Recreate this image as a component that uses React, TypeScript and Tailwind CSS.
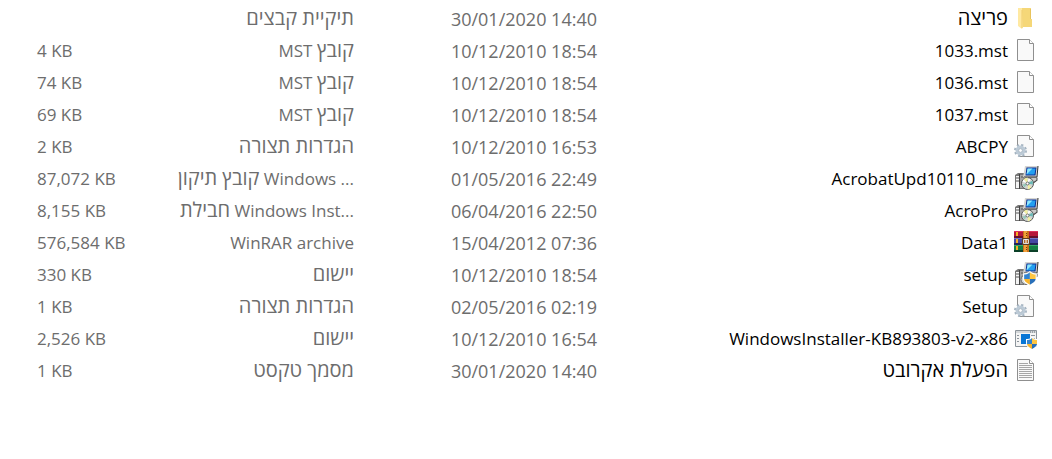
import type { ReactNode } from "react";

type IconName =
  | "folder"
  | "file"
  | "config"
  | "installer"
  | "archive"
  | "setup"
  | "application"
  | "text";

type FileRow = {
  icon: IconName;
  name: string;
  date: string;
  type: string;
  size?: string;
  clipped?: boolean;
};

const files: FileRow[] = [
  { icon: "folder", name: "פריצה", date: "30/01/2020 14:40", type: "תיקיית קבצים" },
  { icon: "file", name: "1033.mst", date: "10/12/2010 18:54", type: "קובץ MST", size: "4 KB" },
  { icon: "file", name: "1036.mst", date: "10/12/2010 18:54", type: "קובץ MST", size: "74 KB" },
  { icon: "file", name: "1037.mst", date: "10/12/2010 18:54", type: "קובץ MST", size: "69 KB" },
  { icon: "config", name: "ABCPY", date: "10/12/2010 16:53", type: "הגדרות תצורה", size: "2 KB" },
  {
    icon: "installer",
    name: "AcrobatUpd10110_me",
    date: "01/05/2016 22:49",
    type: "קובץ תיקון Windows ...",
    size: "87,072 KB",
    clipped: true
  },
  {
    icon: "installer",
    name: "AcroPro",
    date: "06/04/2016 22:50",
    type: "חבילת Windows Inst...",
    size: "8,155 KB",
    clipped: true
  },
  { icon: "archive", name: "Data1", date: "15/04/2012 07:36", type: "WinRAR archive", size: "576,584 KB" },
  { icon: "setup", name: "setup", date: "10/12/2010 18:54", type: "יישום", size: "330 KB" },
  { icon: "config", name: "Setup", date: "02/05/2016 02:19", type: "הגדרות תצורה", size: "1 KB" },
  {
    icon: "application",
    name: "WindowsInstaller-KB893803-v2-x86",
    date: "10/12/2010 16:54",
    type: "יישום",
    size: "2,526 KB"
  },
  { icon: "text", name: "הפעלת אקרובט", date: "30/01/2020 14:40", type: "מסמך טקסט", size: "1 KB" }
];

function Folder() {
  return (
    <>
      <path d="M8 2h9v11h1v8H8z" fill="#f5d778" />
      <path d="M16 3h1v10h-1z" fill="#e8c35c" />
      <path d="M4 2h4l1 19-1 2-4-3z" fill="#ffe9a2" />
      <path d="M8 4v18" stroke="#efcc6d" />
    </>
  );
}

function Page() {
  return (
    <g transform="translate(3 1)">
      <path d="M.5.5h12l4 4v17H.5z" fill="#f9f9f9" stroke="#8f8f8f" />
      <path d="M12.5.5v4h4" fill="#fff" stroke="#8f8f8f" />
    </g>
  );
}

function Config() {
  return (
    <>
      <Page />
      <path d="M0 11h6v13H0z" fill="#fff" />
      <circle cx="6.5" cy="16.5" r="5.5" fill="none" stroke="#a3b2bf" strokeWidth="2" strokeDasharray="2.2 2.12" />
      <circle cx="6.5" cy="16.5" r="3.5" fill="#f7fafc" stroke="#bccad6" strokeWidth="3" />
      <circle cx="6.5" cy="16.5" r="1.9" fill="#fff" stroke="#8fa1b0" strokeWidth=".7" />
    </>
  );
}

function Computer() {
  return (
    <>
      <path d="M1 9l3-2h6v16H1z" fill="#777" />
      <path d="M2 10h3v12H2z" fill="#f4f4f4" />
      <path d="M6 9h4v13H6z" fill="#a5a5a5" />
      <path d="M2 12h3M2 15h3M7 11h3" stroke="#555" />
      <path d="M5.5 8v15" stroke="#444" />
      <path d="M11 0h13l-1 11H9z" fill="#d5d5d2" />
      <path d="M24 0l-1 11H10" fill="none" stroke="#333" />
      <path d="M12.5 1.5h10l-1 8h-10z" fill="#0a2e94" />
      <path d="M13.5 2.5h8l-1 6h-8z" fill="#239ff0" />
      <path d="M13.5 2.5h5l-6 6z" fill="#8ee6fc" />
      <path d="M14 11.5h9.5v3l-4 3h-5z" fill="#444" />
      <path d="M14 12h8.5v2l-3 2h-5z" fill="#c9c9c7" />
    </>
  );
}

function Installer() {
  return (
    <>
      <Computer />
      <circle cx="13.5" cy="17.5" r="6" fill="#d2d5d2" stroke="#555" />
      <path d="M13.5 17.5L9.5 13l4-1.5zM13.5 17.5l4 4-3.5 2z" fill="#f3f0a1" />
      <path d="M13.5 17.5l5-3 .5 4z" fill="#69b9b6" />
      <path d="M13.5 17.5l-5 1 2 3z" fill="#93c7b9" />
      <path d="M13.5 17.5l-5-2 1-2zM13.5 17.5l1-5 2 1z" fill="#fff" />
      <circle cx="13.5" cy="17.5" r="1.5" fill="#fff" stroke="#555" strokeWidth=".8" />
    </>
  );
}

function Shield() {
  return (
    <>
      <path d="M6 0C4 2 2 2 0 2v4c0 3 2 5 6 7 4-2 6-4 6-7V2C10 2 8 2 6 0z" fill="#fff" />
      <path d="M6 1C4 3 2 3 1 3v4h5z" fill="#3484cf" />
      <path d="M6 1c2 2 4 2 5 2v4H6z" fill="#ffc642" />
      <path d="M1 7h5v5C3 10 1 9 1 7z" fill="#f9b52c" />
      <path d="M11 7H6v5c3-2 5-3 5-5z" fill="#286fb9" />
    </>
  );
}

function Archive() {
  return (
    <>
      <path d="M0 1h24v7H0z" fill="#b5163b" />
      <path d="M0 1h24v1H0z" fill="#dc315c" />
      <path d="M0 6h24v2H0z" fill="#65102b" />
      <path d="M0 8h24v7H0z" fill="#4648a3" />
      <path d="M0 8h24v1H0z" fill="#7474ca" />
      <path d="M0 13h24v2H0z" fill="#252458" />
      <path d="M0 15h24v7H0z" fill="#168044" />
      <path d="M0 15h24v1H0z" fill="#37aa67" />
      <path d="M0 20h24v2H0z" fill="#0b4028" />
      <path d="M2 2h2v4H2zM2 9h2v4H2zM2 16h2v4H2z" fill="#f6ae27" />
      <path d="M9 1h6v21H9z" fill="#c9711b" />
      <path d="M10 1h3v21h-3z" fill="#efa03a" />
      <path d="M8 8h8v7H8z" fill="#5b3c24" />
      <path d="M9.5 9.5h5v4h-5z" fill="#b46b29" stroke="#ddd" />
      <path d="M12 9v4" stroke="#fff" />
      <path d="M12 3.5h1M12 5.5h1M12 17.5h1M12 19.5h1" stroke="#70400c" />
    </>
  );
}

function Application() {
  return (
    <>
      <path d="M1.5 4.5h21v16h-21z" fill="#f4f4f4" stroke="#8c949b" />
      <path d="M2 5h20v2H2z" fill="#d3d6d8" />
      <path d="M16 6h1M18 6h1M20 6h1" stroke="#65717a" />
      <path d="M3 9.5h2M3 12.5h2M3 15.5h2M17 9.5h4M17 12.5h4" stroke="#8c949b" />
      <path d="M7 8h9v10H7z" fill="#0876d5" />
      <g transform="translate(12 11)">
        <Shield />
      </g>
    </>
  );
}

function TextDocument() {
  return (
    <>
      <Page />
      <path
        d="M5 5.5h9M5 7.5h13M5 9.5h13M5 11.5h13M5 13.5h13M5 15.5h13M5 17.5h13M5 19.5h13"
        stroke="#a6a6a6"
      />
    </>
  );
}

const icons: Record<IconName, ReactNode> = {
  folder: <Folder />,
  file: <Page />,
  config: <Config />,
  installer: <Installer />,
  archive: <Archive />,
  setup: (
    <>
      <Computer />
      <circle cx="12" cy="17.5" r="5" fill="#d2d5d2" stroke="#666" />
      <g transform="translate(9 9) scale(1.15)">
        <Shield />
      </g>
    </>
  ),
  application: <Application />,
  text: <TextDocument />
};

// Hebrew glyphs look small beside Latin ones at the same size, so they get a larger one.
function Label({ text }: { text: string }) {
  return text
    .split(/([\u0590-\u05ff]+(?: [\u0590-\u05ff]+)*)/)
    .filter(Boolean)
    .map((part) =>
      /[\u0590-\u05ff]/.test(part) ? (
        <span key={part} className="text-[20px] leading-none">
          {part}
        </span>
      ) : (
        part
      )
    );
}

export default function App() {
  return (
    <main
      dir="rtl"
      className="min-h-screen bg-white pt-[3px] font-['Open_Sans','Noto_Sans',sans-serif] text-[17px] leading-8 text-[#6d6d6d]"
    >
      <table aria-label="קבצים" className="w-full table-fixed border-collapse whitespace-nowrap">
        <colgroup>
          <col />
          <col className="w-[243px]" />
          <col className="w-[204px]" />
          <col className="w-[150px]" />
        </colgroup>
        <tbody>
          {files.map((file) => (
            <tr key={file.name} className="h-8">
              <td className="p-0 pr-[14px] text-black">
                <div className="flex h-8 items-center gap-[6px]">
                  <svg viewBox="0 0 24 24" className="mb-[2px] h-6 w-6 shrink-0 overflow-visible" aria-hidden="true">
                    {icons[file.icon]}
                  </svg>
                  <span dir="auto">
                    <Label text={file.name} />
                  </span>
                </div>
              </td>
              <td className="p-0 text-right text-[18px]">
                <span dir="ltr">{file.date}</span>
              </td>
              <td className="p-0 text-right">
                <span dir={file.clipped ? "ltr" : "rtl"}>
                  <Label text={file.type} />
                </span>
              </td>
              <td className="p-0 pl-[37px] text-left">
                <span dir="ltr">{file.size}</span>
              </td>
            </tr>
          ))}
        </tbody>
      </table>
    </main>
  );
}
